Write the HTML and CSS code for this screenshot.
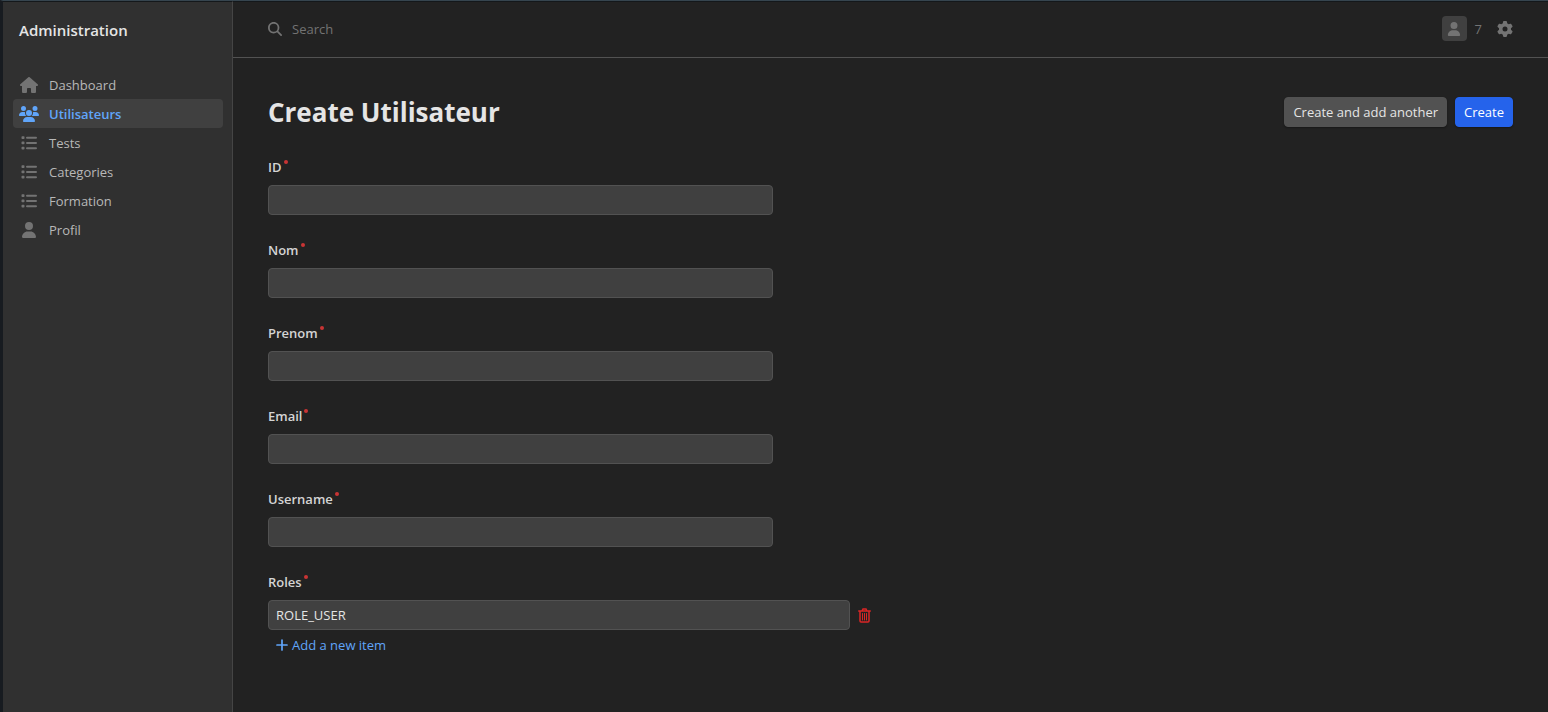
FILE: index.html
```html
<!DOCTYPE html>
<html lang="en">
<head>
<meta charset="utf-8">
<meta name="viewport" content="width=device-width, initial-scale=1">
<title>Create Utilisateur</title>
<link rel="stylesheet" href="styles.css">
</head>
<body>
<svg class="sprite" aria-hidden="true">
  <symbol id="house" viewBox="0 0 576 512"><path d="M575.8 255.5c0 18-15 32.1-32 32.1h-32l.7 160.2c0 2.7-.2 5.4-.5 8.1V472c0 22.1-17.9 40-40 40H392c-22.1 0-40-17.9-40-40V384c0-17.7-14.3-32-32-32H256c-17.7 0-32 14.3-32 32v88c0 22.1-17.9 40-40 40H104c-22.1 0-40-17.9-40-40V287.6H32c-18 0-32-14-32-32.1c0-9 3-17 10-24L266.4 8c7-7 15-8 22-8s15 2 21 7L564.8 231.5c8 7 12 15 11 24z"/></symbol>
  <symbol id="users" viewBox="0 0 640 512"><path d="M144 0a80 80 0 1 1 0 160A80 80 0 1 1 144 0zM512 0a80 80 0 1 1 0 160A80 80 0 1 1 512 0zM0 298.7C0 239.8 47.8 192 106.7 192h42.7c15.9 0 31 3.5 44.6 9.7c-1.3 7.2-1.9 14.7-1.9 22.3c0 38.2 16.8 72.5 43.3 96H21.3C9.6 320 0 310.4 0 298.7zM404.6 320c26.6-23.5 43.3-57.8 43.3-96c0-7.6-.7-15-1.9-22.3c13.6-6.3 28.7-9.7 44.6-9.7h42.7C592.2 192 640 239.8 640 298.7c0 11.8-9.6 21.3-21.3 21.3zM224 224a96 96 0 1 1 192 0 96 96 0 1 1-192 0zM128 485.3C128 411.7 187.7 352 261.3 352H378.7C452.3 352 512 411.7 512 485.3c0 14.7-11.9 26.7-26.7 26.7H154.7c-14.7 0-26.7-11.9-26.7-26.7z"/></symbol>
  <symbol id="list" viewBox="0 0 512 512"><path d="M40 40h48q24 0 24 24v40q0 24-24 24H40q-24 0-24-24V64q0-24 24-24zM40 208h48q24 0 24 24v40q0 24-24 24H40q-24 0-24-24v-40q0-24 24-24zM40 376h48q24 0 24 24v40q0 24-24 24H40q-24 0-24-24v-40q0-24 24-24zM192 56h288a32 32 0 0 1 0 64H192a32 32 0 0 1 0-64zM192 224h288a32 32 0 0 1 0 64H192a32 32 0 0 1 0-64zM192 392h288a32 32 0 0 1 0 64H192a32 32 0 0 1 0-64z"/></symbol>
  <symbol id="user" viewBox="0 0 448 512"><path d="M224 256A128 128 0 1 0 224 0a128 128 0 1 0 0 256zM178.3 304C79.8 304 0 383.8 0 482.3C0 498.7 13.3 512 29.7 512H418.3c16.4 0 29.7-13.3 29.7-29.7C448 383.8 368.2 304 269.7 304z"/></symbol>
  <symbol id="search" viewBox="0 0 512 512"><path d="M416 208c0 45.9-14.9 88.3-40 122.7L502.6 457.4c12.5 12.5 12.5 32.8 0 45.3s-32.8 12.5-45.3 0L330.7 376c-34.4 25.2-76.8 40-122.7 40C93.1 416 0 322.9 0 208S93.1 0 208 0S416 93.1 416 208zM208 352a144 144 0 1 0 0-288 144 144 0 1 0 0 288z"/></symbol>
  <symbol id="gear" viewBox="0 0 512 512"><path d="M495.9 166.6c3.2 8.7 .5 18.4-6.4 24.6l-43.3 39.4c1.1 8.3 1.7 16.8 1.7 25.4s-.6 17.1-1.7 25.4l43.3 39.4c6.9 6.2 9.6 15.9 6.4 24.6c-4.4 11.9-9.7 23.3-15.8 34.3l-4.7 8.1c-6.6 11-14 21.4-22.1 31.2c-5.9 7.2-15.7 9.6-24.5 6.8l-55.7-17.7c-13.4 10.3-28.2 18.9-44 25.4l-12.5 57.1c-2 9.1-9 16.3-18.2 17.8c-13.8 2.3-28 3.5-42.5 3.5s-28.7-1.2-42.5-3.5c-9.2-1.5-16.2-8.7-18.2-17.8l-12.5-57.1c-15.8-6.5-30.6-15.1-44-25.4L83.1 425.9c-8.8 2.8-18.6 .3-24.5-6.8c-8.1-9.8-15.5-20.2-22.1-31.2l-4.7-8.1c-6.1-11-11.4-22.4-15.8-34.3c-3.2-8.7-.5-18.4 6.4-24.6l43.3-39.4C64.6 273.1 64 264.6 64 256s.6-17.1 1.7-25.4L22.4 191.2c-6.9-6.2-9.6-15.9-6.4-24.6c4.4-11.9 9.7-23.3 15.8-34.3l4.7-8.1c6.6-11 14-21.4 22.1-31.2c5.9-7.2 15.7-9.6 24.5-6.8l55.7 17.7c13.4-10.3 28.2-18.9 44-25.4l12.5-57.1c2-9.1 9-16.3 18.2-17.8C227.3 1.2 241.5 0 256 0s28.7 1.2 42.5 3.5c9.2 1.5 16.2 8.7 18.2 17.8l12.5 57.1c15.8 6.5 30.6 15.1 44 25.4l55.7-17.7c8.8-2.8 18.6-.3 24.5 6.8c8.1 9.8 15.5 20.2 22.1 31.2l4.7 8.1c6.1 11 11.4 22.4 15.8 34.3zM256 336a80 80 0 1 0 0-160 80 80 0 1 0 0 160z"/></symbol>
  <symbol id="trash" viewBox="0 0 13 15"><path d="M4 3l1-2h3l1 2M.7 3h11.6M2 3v10q0 1 1 1h7q1 0 1-1V3" fill="none" stroke="currentColor" stroke-width="1.5" stroke-linecap="round"/><path d="M4.5 5.5v6.5M6.5 5.500v6.500M8.500 5.500v6.500" fill="none" stroke="currentColor" stroke-linecap="round"/></symbol>
  <symbol id="plus" viewBox="0 0 12 12"><path d="M6 1v10M1 6h10" fill="none" stroke="currentColor" stroke-width="1.7" stroke-linecap="round"/></symbol>
</svg>
<div class="app">
  <aside class="sidebar">
    <a class="brand" href="#">Administration</a>
    <nav class="menu">
      <a class="menu-item" href="#"><span class="menu-icon"><svg class="icon-house"><use href="#house"/></svg></span>Dashboard</a>
      <a class="menu-item active" href="#" aria-current="page"><span class="menu-icon"><svg class="icon-users"><use href="#users"/></svg></span>Utilisateurs</a>
      <a class="menu-item" href="#"><span class="menu-icon"><svg class="icon"><use href="#list"/></svg></span>Tests</a>
      <a class="menu-item" href="#"><span class="menu-icon"><svg class="icon"><use href="#list"/></svg></span>Categories</a>
      <a class="menu-item" href="#"><span class="menu-icon"><svg class="icon"><use href="#list"/></svg></span>Formation</a>
      <a class="menu-item" href="#"><span class="menu-icon"><svg class="icon"><use href="#user"/></svg></span>Profil</a>
    </nav>
  </aside>
  <div class="page">
    <header class="topbar">
      <label class="search"><svg class="icon-search" role="img" aria-label="Search"><use href="#search"/></svg><input class="search-input" type="search" placeholder="Search"></label>
      <div class="tools">
        <button class="account" type="button"><span class="avatar"><svg class="icon-avatar"><use href="#user"/></svg></span>7</button>
        <button class="settings" type="button" aria-label="Settings"><svg class="icon"><use href="#gear"/></svg></button>
      </div>
    </header>
    <main class="content">
      <div class="heading">
        <h1 class="title">Create Utilisateur</h1>
        <div class="actions">
          <button class="btn btn-secondary" type="submit" form="create">Create and add another</button>
          <button class="btn btn-primary" type="submit" form="create">Create</button>
        </div>
      </div>
      <form class="form" id="create">
        <div class="field"><label class="label" for="f-id">ID</label><input class="input" id="f-id" type="text" required></div>
        <div class="field"><label class="label" for="f-nom">Nom</label><input class="input" id="f-nom" type="text" required></div>
        <div class="field"><label class="label" for="f-prenom">Prenom</label><input class="input" id="f-prenom" type="text" required></div>
        <div class="field"><label class="label" for="f-email">Email</label><input class="input" id="f-email" type="email" required></div>
        <div class="field"><label class="label" for="f-username">Username</label><input class="input" id="f-username" type="text" required></div>
        <div class="field field-wide">
          <label class="label" for="f-role">Roles</label>
          <div class="item"><input class="input" id="f-role" type="text" value="ROLE_USER" required><button class="delete" type="button" aria-label="Remove item"><svg class="icon-trash"><use href="#trash"/></svg></button></div>
          <button class="add" type="button"><svg class="icon-plus"><use href="#plus"/></svg>Add a new item</button>
        </div>
      </form>
    </main>
  </div>
</div>
</body>
</html>
```
FILE: styles.css
```css
* { box-sizing: border-box; }

body {
  margin: 0;
  background: #222;
  color: #d4d4d4;
  font: 13px/20px "Open Sans", "Noto Sans", sans-serif;
}

button, input { font: inherit; color: inherit; }
button { border: 0; padding: 0; background: none; cursor: pointer; }
a { color: inherit; text-decoration: none; }
svg { display: block; fill: currentColor; }
.sprite { display: none; }

.app {
  display: flex;
  min-height: 100vh;
  border-top: 1px solid #36454f;
  border-left: 3px solid #171b20;
}

.sidebar {
  flex: 0 0 230px;
  padding: 0 9px 0 10px;
  border-top: 1px solid #14181b;
  border-right: 1px solid #454545;
  background: #303030;
}

.brand {
  display: block;
  padding: 18px 6px 30px;
  color: #e5e5e5;
  font-size: 15px;
  font-weight: 600;
}

.menu-item {
  display: flex;
  align-items: center;
  gap: 10px;
  height: 29px;
  padding: 0 6px;
  border-radius: 4px;
  color: #b8b8b8;
}
.menu-icon { display: flex; justify-content: center; width: 20px; color: #737373; }
.menu-item.active { background: #404040; color: #60a5fa; font-weight: 600; }
.menu-item.active .menu-icon { color: inherit; }

.icon { width: 16px; height: 16px; }
.icon-house { width: 18px; height: 16px; }
.icon-users { width: 20px; height: 16px; }
.icon-search { width: 14px; height: 14px; color: #737373; }
.icon-avatar { width: 14px; height: 14px; }
.icon-trash { width: 13px; height: 15px; }
.icon-plus { width: 12px; height: 12px; }

.page { flex: 1; min-width: 0; border-top: 1px solid #14181b; }

.topbar {
  display: flex;
  align-items: center;
  justify-content: space-between;
  height: 56px;
  padding: 0 35px 2px;
  border-bottom: 1px solid #525252;
}
.search { display: flex; flex: 1; align-items: center; gap: 10px; }
.search-input { flex: 1; padding: 0; border: 0; outline: 0; background: none; }
.search-input::placeholder { color: #737373; opacity: 1; }
.tools { display: flex; align-items: center; gap: 15px; color: #737373; }
.account { display: flex; align-items: center; gap: 8px; }
.avatar {
  display: grid;
  place-items: center;
  width: 25px;
  height: 25px;
  border-radius: 4px;
  background: #404040;
}

.content { padding: 34px 35px; }
.heading { display: flex; align-items: center; justify-content: space-between; }
.title { margin: 0; color: #e5e5e5; font-size: 26px; font-weight: 700; line-height: 40px; }
.actions { display: flex; gap: 8px; }
.btn {
  height: 30px;
  padding: 0 8px;
  border: 1px solid #525252;
  border-radius: 4px;
  background: #525252;
  color: #e5e5e5;
  box-shadow: 0 1px 2px #0005;
}
.btn-primary { background: #2563eb; border-color: #2563eb; color: #fff; }

.form { display: grid; gap: 25px; padding-top: 25px; }
.field { max-width: 505px; }
.field-wide { max-width: 603px; }
.label { display: flex; gap: 2px; margin-bottom: 8px; line-height: 20px; font-weight: 600; }
.label::after {
  content: "";
  width: 4px;
  height: 4px;
  margin-top: 3px;
  border-radius: 50%;
  background: #c93434;
}
.input {
  display: block;
  width: 100%;
  height: 30px;
  padding: 0 7px;
  border: 1px solid #525252;
  border-radius: 4px;
  outline: 0;
  background: #404040;
  color: #e5e5e5;
}
.item { display: flex; align-items: center; gap: 8px; }
.delete { color: #dc2626; }
.add { display: flex; align-items: center; gap: 4px; margin: 5px 0 0 8px; color: #60a5fa; }
```
